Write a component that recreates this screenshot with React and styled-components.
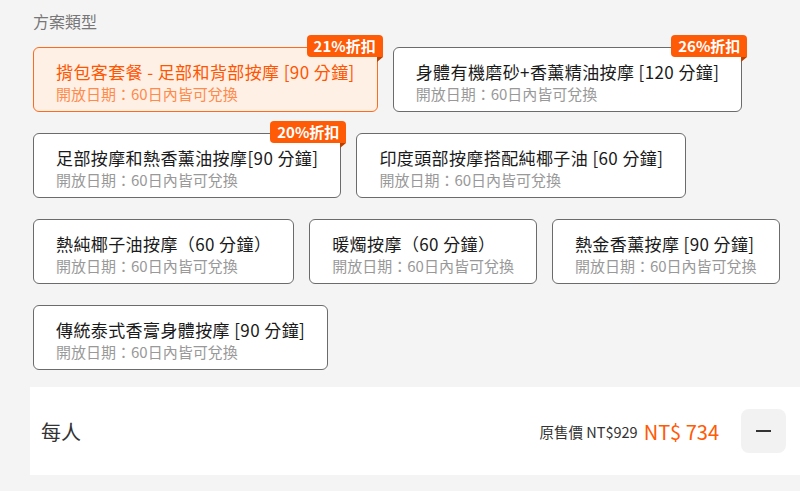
import React from 'react';
import styled, { createGlobalStyle } from 'styled-components';

const GlobalStyle = createGlobalStyle`
  html, body {
    margin: 0;
    padding: 0;
    background: #f4f4f4;
    font-family: "Noto Sans CJK TC", "Noto Sans", sans-serif;
  }
`;

const plans = [
  { title: '揹包客套餐 - 足部和背部按摩 [90 分鐘]', badge: '21%折扣', active: true },
  { title: '身體有機磨砂+香薰精油按摩 [120 分鐘]', badge: '26%折扣' },
  { title: '足部按摩和熱香薰油按摩[90 分鐘]', badge: '20%折扣' },
  { title: '印度頭部按摩搭配純椰子油 [60 分鐘]' },
  { title: '熱純椰子油按摩（60 分鐘）' },
  { title: '暖燭按摩（60 分鐘）' },
  { title: '熱金香薰按摩 [90 分鐘]' },
  { title: '傳統泰式香膏身體按摩 [90 分鐘]' },
];

const Page = styled.div`
  width: 800px;
  height: 491px;
  overflow: hidden;
  box-sizing: border-box;
  padding-top: 10px;
`;

const Section = styled.section`
  padding: 0 0 0 33px;
`;

const Heading = styled.h3`
  margin: 0 0 15px;
  font-size: 16px;
  line-height: 22px;
  font-weight: 400;
  color: #777;
`;

const Grid = styled.div`
  display: flex;
  flex-wrap: wrap;
  column-gap: 15px;
  row-gap: 21px;
`;

const Card = styled.div`
  position: relative;
  box-sizing: border-box;
  height: 65px;
  padding: 13px 22px 6px;
  border: 1px solid ${(p) => (p.$active ? '#ff6a1c' : '#6b6b6b')};
  border-radius: 6px;
  background: ${(p) => (p.$active ? '#fff0e6' : '#fff')};
  cursor: pointer;
`;

const Title = styled.div`
  font-size: 17px;
  line-height: 22px;
  letter-spacing: 0.4px;
  white-space: nowrap;
  color: ${(p) => (p.$active ? '#ff5500' : '#1a1a1a')};
`;

const Sub = styled.div`
  font-size: 15px;
  line-height: 22px;
  white-space: nowrap;
  color: ${(p) => (p.$active ? '#ff8a4c' : '#999')};
`;

const Badge = styled.span`
  position: absolute;
  top: -13px;
  right: -6px;
  height: 22px;
  padding: 0 7px;
  border-radius: 4px 4px 0 4px;
  background: #ff5a06;
  color: #fff;
  font-size: 15px;
  font-weight: 700;
  line-height: 22px;

  &::after {
    content: "";
    position: absolute;
    top: 100%;
    right: 0;
    width: 0;
    height: 0;
    border-top: 5px solid #b84000;
    border-right: 6px solid transparent;
  }
`;

const Panel = styled.div`
  display: flex;
  align-items: center;
  margin: 17px 0 0 30px;
  height: 88px;
  padding: 0 14px 0 11px;
  background: #fff;
`;

const Per = styled.div`
  flex: 1;
  font-size: 20px;
  color: #333;
`;

const Orig = styled.span`
  font-size: 14.5px;
  color: #333;
  margin-right: 6px;
`;

const Price = styled.span`
  font-size: 20px;
  color: #ff5a06;
  margin-right: 22px;
`;

const MinusBtn = styled.button`
  width: 45px;
  height: 44px;
  border: none;
  border-radius: 8px;
  background: #f2f2f2;
  display: flex;
  align-items: center;
  justify-content: center;
  padding: 0;

  &::before {
    content: "";
    width: 15px;
    height: 2px;
    background: #333;
  }
`;

export default function App() {
  return (
    <Page>
      <GlobalStyle />
      <Section>
        <Heading>方案類型</Heading>
        <Grid>
          {plans.map((p) => (
            <Card key={p.title} $active={p.active}>
              {p.badge && <Badge>{p.badge}</Badge>}
              <Title $active={p.active}>{p.title}</Title>
              <Sub $active={p.active}>開放日期：60日內皆可兌換</Sub>
            </Card>
          ))}
        </Grid>
      </Section>
      <Panel>
        <Per>每人</Per>
        <Orig>原售價 NT$929</Orig>
        <Price>NT$ 734</Price>
        <MinusBtn aria-label="減少" />
      </Panel>
    </Page>
  );
}
